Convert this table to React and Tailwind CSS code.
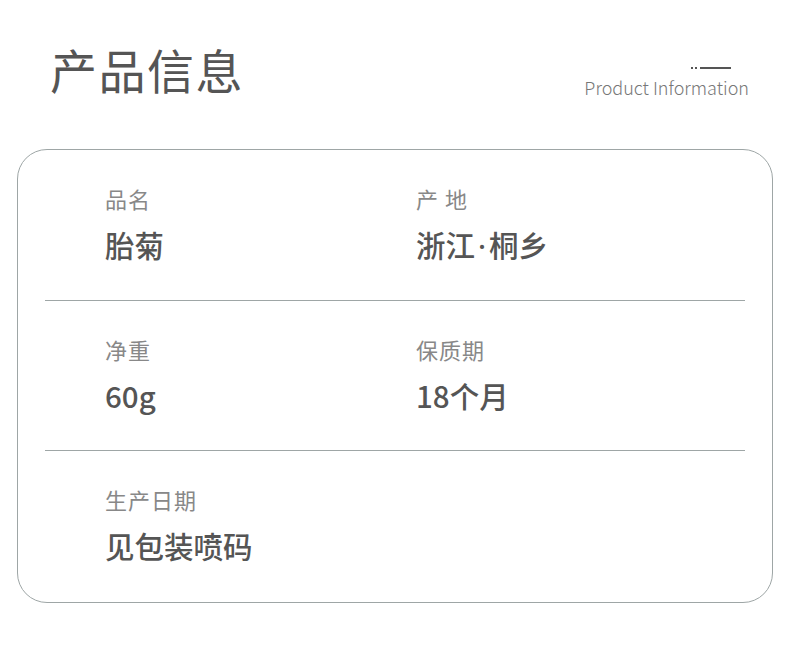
import React from 'react';

const rows = [
  [
    { label: '品名', value: '胎菊' },
    {
      label: '产\u00a0地',
      value: (
        <>
          浙江<span className="px-[3px]" style={{ fontFamily: '"Noto Sans", sans-serif' }}>·</span>桐乡
        </>
      ),
    },
  ],
  [
    { label: '净重', value: '60g' },
    { label: '保质期', value: '18个月' },
  ],
  [{ label: '生产日期', value: '见包装喷码' }],
];

const Field = ({ label, value }) => (
  <div className="flex flex-col">
    <span className="text-[22px] leading-[30px] text-[#888] tracking-[1px]">{label}</span>
    <span className="mt-[13px] text-[29.5px] leading-[37px] text-[#555] font-medium">{value}</span>
  </div>
);

const App = () => {
  return (
    <div
      className="w-[790px] h-[645px] bg-white overflow-hidden"
      style={{ fontFamily: '"Noto Sans CJK SC", "Noto Sans", sans-serif' }}
    >
      {/* Header */}
      <div className="flex items-start justify-between pl-[50px] pr-[41px] pt-[43px] h-[149px]">
        <h1 className="text-[47px] leading-[52px] text-[#555] tracking-[1.5px]">产品信息</h1>
        <div className="flex flex-col items-end pt-[24px]">
          <div className="flex items-center gap-[2px] mr-[18px]">
            <span className="w-[2px] h-[2px] bg-[#555]"></span>
            <span className="w-[2px] h-[2px] bg-[#555]"></span>
            <span className="w-[31px] h-[2px] bg-[#555] ml-[1px]"></span>
          </div>
          <span className="mt-[6px] text-[18px] leading-[24px] text-[#777] font-light">Product Information</span>
        </div>
      </div>

      {/* Card */}
      <div className="ml-[17px] w-[756px] h-[454px] border border-[#9ea6a6] rounded-[30px] flex flex-col">
        {rows.map((row, i) => (
          <div
            key={i}
            className={`mx-[27px] h-[151px] ${i < rows.length - 1 ? 'border-b border-[#9ea6a6]' : ''}`}
          >
            <div className="grid grid-cols-[311px_1fr] pl-[60px] pt-[33px]">
              {row.map((f, j) => (
                <Field key={j} label={f.label} value={f.value} />
              ))}
            </div>
          </div>
        ))}
      </div>
    </div>
  );
};

export default App;
